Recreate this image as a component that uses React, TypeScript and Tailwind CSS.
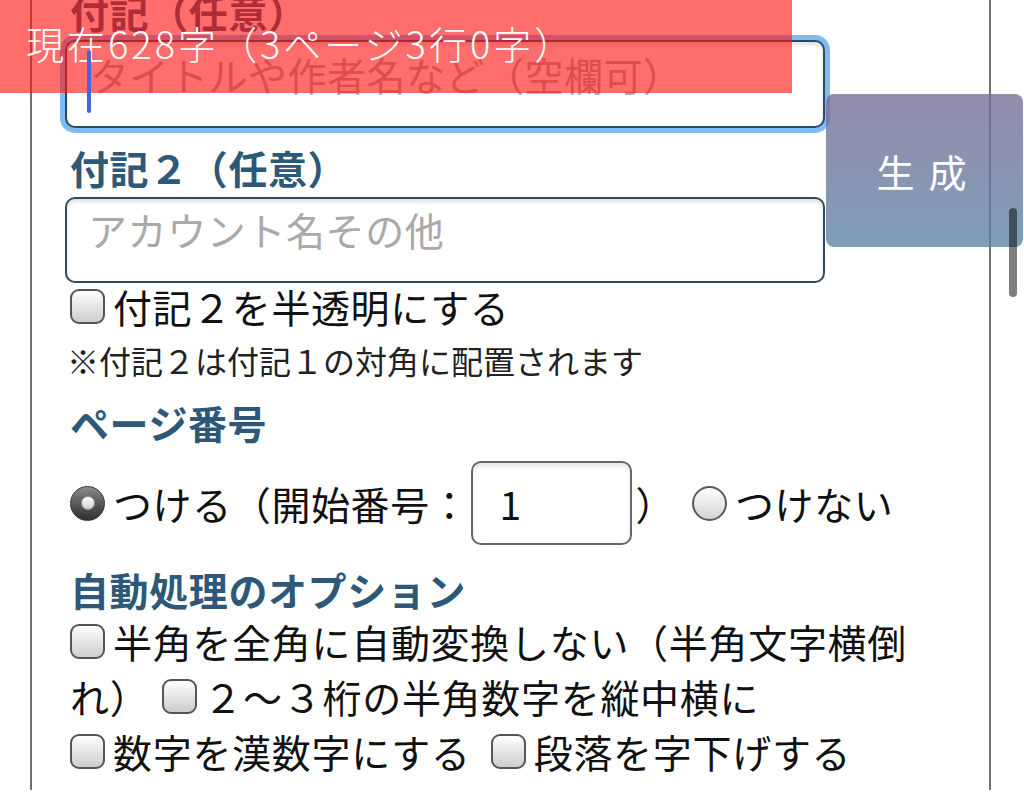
import React from "react";

function Checkbox({ extra = "" }: { extra?: string }) {
  return (
    <span
      className={
        "inline-block shrink-0 w-[35px] h-[35px] rounded-[9px] border-2 border-[#555] bg-gradient-to-b from-white to-[#cdcdcd] " +
        extra
      }
    />
  );
}

export default function App() {
  return (
    <div className="relative w-[1024px] h-[801px] overflow-hidden bg-white font-['Noto_Sans_CJK_JP','Noto_Sans',sans-serif] text-[#111]">
      <div className="ml-[30px] w-[961px] h-[801px] border-x-2 border-[#707070] pl-[33px]">
        {/* 付記1 */}
        <div className="-mt-[11px] h-[44px] leading-[44px] pl-[5px] text-[39px] tracking-[0.6px] font-bold text-[#2d5878]">
          付記（任意）
        </div>
        <div className="relative mt-[7px] w-[760px] h-[88px]">
          <input
            readOnly
            placeholder="タイトルや作者名など（空欄可）"
            className="w-[760px] h-[88px] rounded-[10px] border-2 border-[#2c4a60] bg-white pl-[23px] pb-[20px] text-[39px] tracking-[0.5px] outline-none placeholder:text-[#a9a9a9] shadow-[0_0_0_5px_#7fbbf4,inset_0_3px_4px_rgba(0,0,0,0.12)]"
          />
        </div>

        {/* 付記2 */}
        <div className="mt-[17px] h-[44px] leading-[44px] pl-[5px] text-[39px] tracking-[0.6px] font-bold text-[#2d5878]">
          付記２（任意）
        </div>
        <input
          readOnly
          placeholder="アカウント名その他"
          className="mt-[8px] block w-[760px] h-[86px] rounded-[10px] border-2 border-[#2c4a60] bg-white pl-[21px] pb-[22px] text-[39px] tracking-[0.6px] outline-none placeholder:text-[#a9a9a9] shadow-[inset_0_3px_4px_rgba(0,0,0,0.12)]"
        />

        <div className="mt-[1px] h-[44px] flex items-center pl-[5px] text-[39px] tracking-[0.6px] leading-none">
          <Checkbox extra="mr-[8px]" />
          <span>付記２を半透明にする</span>
        </div>

        <div className="mt-[12px] h-[40px] leading-[40px] pl-[2px] text-[32px] text-[#222]">
          ※付記２は付記１の対角に配置されます
        </div>

        <div className="mt-[20px] h-[44px] leading-[44px] pl-[5px] text-[39px] tracking-[0.6px] font-bold text-[#2d5878]">
          ページ番号
        </div>

        <div className="mt-[17px] h-[84px] flex items-center pl-[5px] text-[39px] tracking-[0.6px] leading-none">
          <span className="shrink-0 w-[35px] h-[35px] rounded-full border border-[#3a3a3a] bg-gradient-to-b from-[#8a8a8a] to-[#2f2f2f] flex items-center justify-center mr-[8px]">
            <span className="w-[14px] h-[14px] rounded-full bg-gradient-to-b from-white to-[#cfcfcf] border border-[#999]" />
          </span>
          <span>つける（開始番号：</span>
          <input
            readOnly
            value="1"
            className="ml-[2px] w-[161px] h-[84px] rounded-[10px] border-2 border-[#666] bg-white pl-[26px] text-[39px] outline-none shadow-[inset_0_3px_4px_rgba(0,0,0,0.1)]"
          />
          <span className="ml-[3px]">）</span>
          <span className="ml-[17px] shrink-0 w-[35px] h-[35px] rounded-full border-2 border-[#5a5a5a] bg-gradient-to-b from-white to-[#d4d4d4] mr-[8px]" />
          <span>つけない</span>
        </div>

        <div className="mt-[22px] h-[44px] leading-[44px] pl-[5px] text-[39px] tracking-[0.6px] font-bold text-[#2d5878]">
          自動処理のオプション
        </div>

        <div className="mt-[3px] pl-[5px] text-[39px] tracking-[0.7px] leading-none whitespace-nowrap">
          <div className="h-[55px] flex items-center">
            <Checkbox extra="mr-[8px]" />
            <span>半角を全角に自動変換しない（半角文字横倒</span>
          </div>
          <div className="h-[55px] flex items-center">
            <span>れ）</span>
            <Checkbox extra="ml-[13px] mr-[6px]" />
            <span>２～３桁の半角数字を縦中横に</span>
          </div>
          <div className="h-[55px] flex items-center">
            <Checkbox extra="mr-[8px]" />
            <span>数字を漢数字にする</span>
            <Checkbox extra="ml-[20px] mr-[8px]" />
            <span>段落を字下げする</span>
          </div>
        </div>
      </div>

      {/* Overlay: character count */}
      <div className="absolute left-0 top-0 w-[792px] h-[93px] bg-[rgba(255,20,20,0.62)] flex items-center pl-[26px] pb-[8px]">
        <span className="text-[38px] leading-none tracking-[3px] font-light text-white">現在628字（3ページ3行0字）</span>
      </div>

      {/* caret of focused field (drawn above overlay) */}
      <span className="absolute left-[87px] top-[50px] w-[4px] h-[63px] rounded-full bg-[#4a64e0]" />

      {/* Overlay: generate button */}
      <button className="absolute left-[826px] top-[94px] w-[197px] h-[153px] rounded-[8px] bg-gradient-to-b from-[rgba(120,110,150,0.8)] to-[rgba(92,134,166,0.8)] flex items-center justify-center text-[38px] text-white tracking-[14px] pl-[8px]">
        生成
      </button>

      {/* scrollbar */}
      <div className="absolute left-[1009px] top-[208px] w-[8px] h-[89px] rounded-full bg-[rgba(0,0,0,0.5)]" />
    </div>
  );
}
